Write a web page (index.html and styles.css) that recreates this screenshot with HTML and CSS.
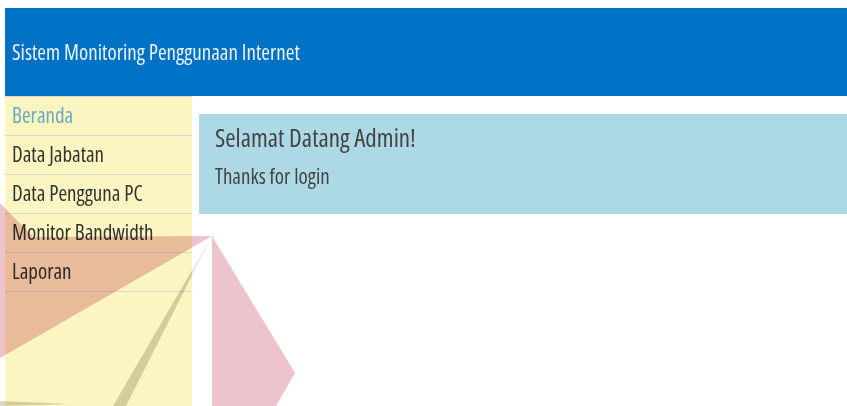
FILE: index.html
```html
<!DOCTYPE html>
<html lang="id">
<head>
<meta charset="utf-8">
<title>Sistem Monitoring Penggunaan Internet</title>
<link rel="stylesheet" href="styles.css">
</head>
<body>
<div class="page">
  <header class="topbar">
    <h1 class="brand">Sistem Monitoring Penggunaan Internet</h1>
  </header>
  <div class="layout">
    <nav class="sidebar">
      <ul class="menu">
        <li class="menu-item active">Beranda</li>
        <li class="menu-item">Data Jabatan</li>
        <li class="menu-item">Data Pengguna PC</li>
        <li class="menu-item">Monitor Bandwidth</li>
        <li class="menu-item">Laporan</li>
      </ul>
    </nav>
    <main class="content">
      <section class="welcome">
        <h2 class="welcome-title">Selamat Datang Admin!</h2>
        <p class="welcome-text">Thanks for login</p>
      </section>
    </main>
  </div>
</div>
<!-- campus emblem stamped over the page -->
<svg class="emblem" width="847" height="406" viewBox="0 0 847 406" aria-hidden="true">
  <g class="emblem-shapes">
    <polygon class="petal" points="0,203 33,237 212,236 0,358"/>
    <polygon class="petal" points="212,236 295,373 276,406 212,406"/>
    <polygon class="blade-faint" points="212,236 192,275.5 192,270.3"/>
    <polygon class="blade" points="192,270.3 192,275.5 126,406 113,406"/>
    <polygon class="blade" points="0,401 70,404 0,406"/>
  </g>
</svg>
</body>
</html>
```

FILE: styles.css
```css
html, body {
  margin: 0;
  padding: 0;
  background: #ffffff;
}

body {
  position: relative;
  height: 406px;
  overflow: hidden;
  font-family: "Open Sans", "DejaVu Sans Condensed", sans-serif;
  font-stretch: 75%;
}

.page {
  margin: 8px 0 0 5px;
}

.topbar {
  height: 88px;
  background: #0072c6;
  display: flex;
  align-items: center;
  padding-left: 7px;
}

.brand {
  margin: 0;
  font-size: 21px;
  font-weight: normal;
  color: #eaf1f9;
}

.layout {
  display: flex;
  align-items: flex-start;
}

.sidebar {
  width: 187px;
  height: 310px;
  background: #faf5c1;
  flex: none;
}

.menu {
  list-style: none;
  margin: 0;
  padding: 0;
  border-top: 1px solid #dcdcd4;
}

.menu-item {
  height: 38px;
  line-height: 36px;
  padding: 0 0 0 7px;
  border-bottom: 1px solid #d8d8d2;
  font-size: 21px;
  color: #333333;
}

.menu-item.active {
  color: #6ea9c1;
}

.content {
  flex: 1;
  margin: 18px 0 0 7px;
}

.welcome {
  height: 100px;
  box-sizing: border-box;
  background: #add8e6;
  padding: 9px 16px;
}

.welcome-title {
  margin: 0;
  font-size: 25px;
  font-weight: normal;
  color: #444444;
  line-height: 28px;
}

.welcome-text {
  margin: 14px 0 0;
  font-size: 21px;
  color: #444444;
  line-height: 22px;
}

.emblem {
  position: absolute;
  left: 0;
  top: 0;
  pointer-events: none;
}

.petal {
  fill: #edc4cb;
  mix-blend-mode: multiply;
}

.blade {
  fill: #d9d6cc;
  mix-blend-mode: multiply;
}

.blade-faint {
  fill: #e8e8e8;
  mix-blend-mode: multiply;
}
```
